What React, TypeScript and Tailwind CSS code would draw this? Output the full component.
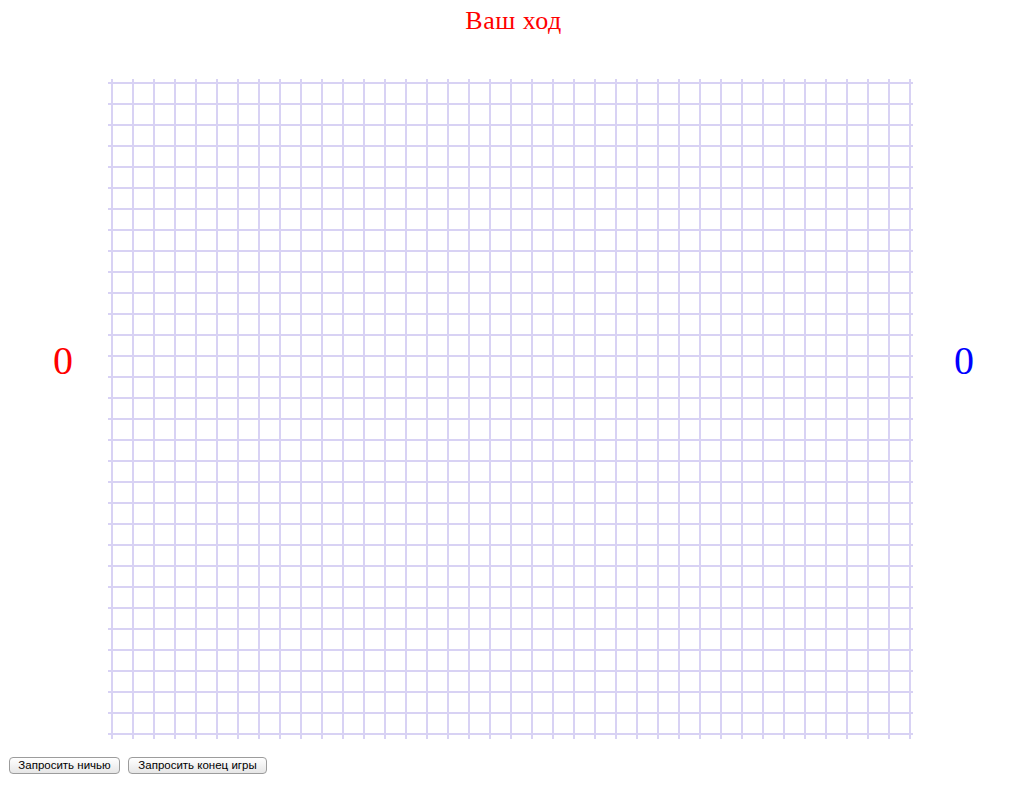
import React from 'react';

const COLS = 39;
const ROWS = 32;
const STEP = 21;

const Board = () => {
  const w = 806;
  const h = 660;
  return (
    <svg width={w} height={h} className="block shrink-0">
      {Array.from({ length: ROWS }).map((_, j) => (
        <rect key={'h' + j} x={0} y={3 + j * STEP} width={w - 1} height={2} fill="#d8d2f4" />
      ))}
      {Array.from({ length: COLS }).map((_, i) => (
        <rect key={'v' + i} x={3 + i * STEP} y={0} width={2} height={h} fill="#d8d2f4" />
      ))}
    </svg>
  );
};

const App = () => {
  return (
    <div className="w-[1020px] h-[794px] bg-white font-['Liberation_Serif',serif]">
      <div className="pt-[7px] pl-[7px] text-center text-[26px] leading-[28px] tracking-[0.5px] text-[#ff0000]">Ваш ход</div>

      <div className="mt-[44px] flex">
        <div className="w-[108px] shrink-0 pr-[35px] text-right">
          <div className="mt-[262px] text-[40px] leading-[40px] text-[#ff0000]">0</div>
        </div>
        <Board />
        <div className="flex-1 pl-[40px]">
          <div className="mt-[262px] text-[40px] leading-[40px] text-[#0000ff]">0</div>
        </div>
      </div>

      <div className="mt-[18px] flex gap-[8px] pl-[9px] font-['Liberation_Sans',sans-serif]">
        <button className="h-[17px] w-[111px] rounded-[4px] border border-[#9c9c9c] bg-linear-to-b from-white to-[#e6e6e6] text-[11.5px] leading-[15px] text-black">
          Запросить ничью
        </button>
        <button className="h-[17px] w-[139px] rounded-[4px] border border-[#9c9c9c] bg-linear-to-b from-white to-[#e6e6e6] text-[11.5px] leading-[15px] text-black">
          Запросить конец игры
        </button>
      </div>
    </div>
  );
};

export default App;
